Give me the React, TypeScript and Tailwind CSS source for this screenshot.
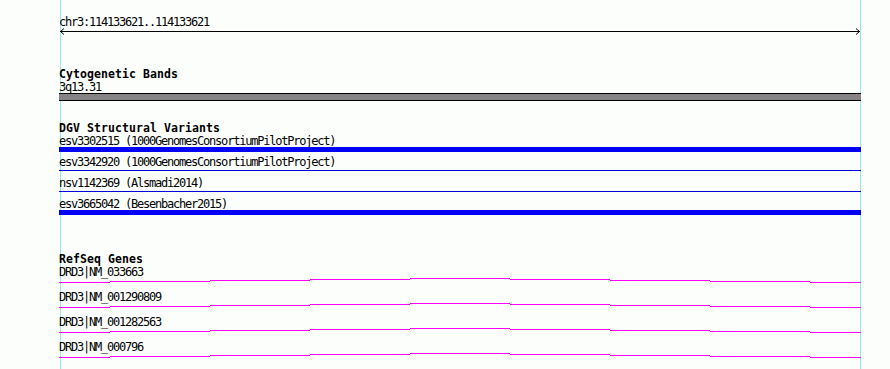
const text =
  "font-['DejaVu_Sans_Mono','Liberation_Mono',monospace] text-[12px] leading-[12px] tracking-[-1.22px] text-black whitespace-pre";
const title =
  "font-['DejaVu_Sans_Mono','Liberation_Mono',monospace] text-[11.5px] leading-[12px] tracking-[0.08px] font-bold text-black whitespace-pre mb-[1px]";

const variants = [
  { label: 'esv3302515 (1000GenomesConsortiumPilotProject)', thick: true },
  { label: 'esv3342920 (1000GenomesConsortiumPilotProject)', thick: false },
  { label: 'nsv1142369 (Alsmadi2014)', thick: false },
  { label: 'esv3665042 (Besenbacher2015)', thick: true },
];

const genes = ['DRD3|NM_033663', 'DRD3|NM_001290809', 'DRD3|NM_001282563', 'DRD3|NM_000796'];

// gene line is drawn in 100px steps, rising to the middle and back down
const steps = [0, 51, 151, 251, 351, 451, 551, 651, 751, 802];
const lift = [4, 3, 2, 1, 0, 1, 2, 3, 4];

function GeneLine() {
  return (
    <svg width="802" height="13" className="block" shapeRendering="crispEdges">
      {lift.map((dy, i) => (
        <line key={i} x1={steps[i]} x2={steps[i + 1]} y1={dy + 0.5} y2={dy + 0.5} stroke="#ff00ff" strokeWidth="1" />
      ))}
    </svg>
  );
}

function Ruler() {
  return (
    <svg width="802" height="7" className="block" shapeRendering="crispEdges">
      <line x1="1" x2="801" y1="3.5" y2="3.5" stroke="#000" />
      <polyline points="5,0.5 1.5,3.5 5,6.5" fill="none" stroke="#000" shapeRendering="auto" />
      <polyline points="797,0.5 800.5,3.5 797,6.5" fill="none" stroke="#000" shapeRendering="auto" />
    </svg>
  );
}

export default function App() {
  return (
    <div className="relative w-[890px] h-[369px] overflow-hidden bg-[#fcfefc]">
      {/* grid lines at the view edges */}
      <div className="absolute top-0 bottom-0 left-[60px] w-px bg-[#94eaee]" />
      <div className="absolute top-0 bottom-0 left-[860px] w-px bg-[#94eaee]" />

      <div className="relative ml-[59px] w-[802px] flex flex-col pt-[16px]">
        <div className={text}>chr3:114133621..114133621</div>
        <Ruler />

        <div className="mt-[33px] flex flex-col">
          <div className={title}>Cytogenetic Bands</div>
          <div className={text}>3q13.31</div>
          <div className="h-[8px] bg-[#858385] border-y border-black" />
        </div>

        <div className="mt-[21px] flex flex-col">
          <div className={title}>DGV Structural Variants</div>
          {variants.map((v) => (
            <div key={v.label} className="flex flex-col h-[21px]">
              <div className={text}>{v.label}</div>
              {v.thick ? (
                <div className="h-[5px] bg-[#0000f4]" />
              ) : (
                <div className="h-[5px] flex flex-col justify-center">
                  <div className="h-px bg-[#0000d8]" />
                </div>
              )}
            </div>
          ))}
        </div>

        <div className="mt-[34px] flex flex-col">
          <div className={title}>RefSeq Genes</div>
          {genes.map((g) => (
            <div key={g} className="flex flex-col h-[25px]">
              <div className={text}>{g}</div>
              <GeneLine />
            </div>
          ))}
        </div>
      </div>
    </div>
  );
}
